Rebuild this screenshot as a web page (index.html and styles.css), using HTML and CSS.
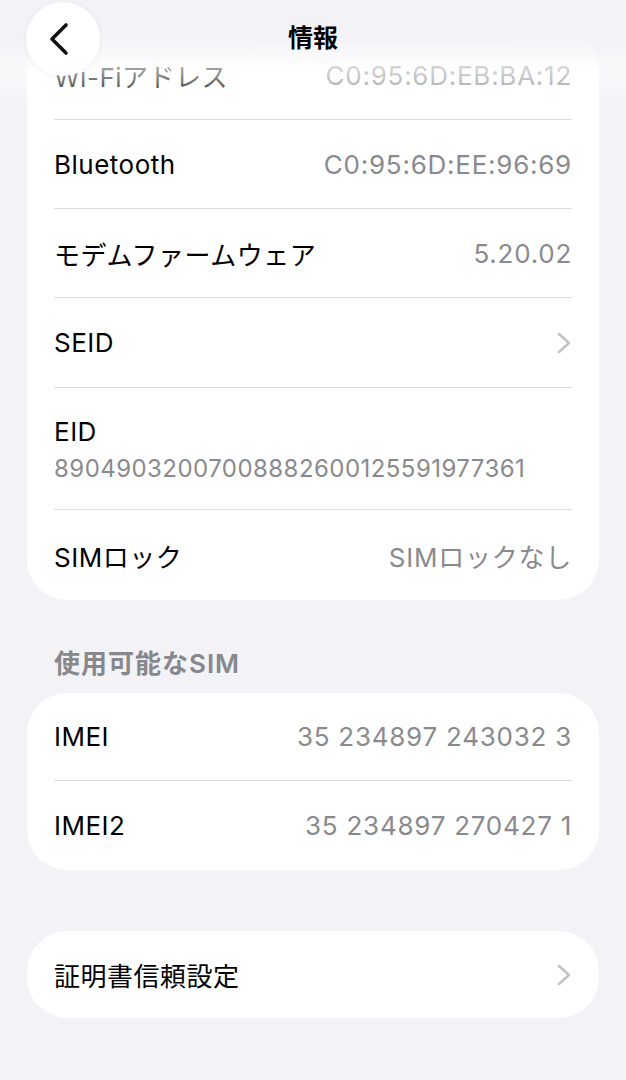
FILE: index.html
```html
<!DOCTYPE html>
<html lang="ja">
<head>
    <meta charset="UTF-8">
    <meta name="viewport" content="width=device-width, initial-scale=1.0">
    <title>情報</title>
    <link rel="stylesheet" href="styles.css">
</head>
<body>
    <header class="nav">
        <button class="back" aria-label="戻る">
            <svg width="24" height="34" viewBox="0 0 24 34">
                <path d="M17 3 L3 17 L17 31" fill="none" stroke="#111" stroke-width="3.6" stroke-linecap="round" stroke-linejoin="round"/>
            </svg>
        </button>
        <h1 class="nav-title">情報</h1>
    </header>

    <main class="page">
        <section class="card card-info">
            <div class="row">
                <span class="label">Wi-Fiアドレス</span>
                <span class="value">C0:95:6D:EB:BA:12</span>
            </div>
            <div class="row">
                <span class="label">Bluetooth</span>
                <span class="value">C0:95:6D:EE:96:69</span>
            </div>
            <div class="row">
                <span class="label">モデムファームウェア</span>
                <span class="value">5.20.02</span>
            </div>
            <div class="row">
                <span class="label">SEID</span>
                <svg class="chevron" width="16" height="22" viewBox="0 0 16 22">
                    <path d="M3 2 L13 11 L3 20" fill="none" stroke="#c4c4c7" stroke-width="2.6" stroke-linecap="round" stroke-linejoin="round"/>
                </svg>
            </div>
            <div class="row row-stack">
                <span class="label">EID</span>
                <span class="value-sub">89049032007008882600125591977361</span>
            </div>
            <div class="row">
                <span class="label">SIMロック</span>
                <span class="value">SIMロックなし</span>
            </div>
        </section>

        <h2 class="section-title">使用可能なSIM</h2>
        <section class="card card-sim">
            <div class="row">
                <span class="label">IMEI</span>
                <span class="value">35 234897 243032 3</span>
            </div>
            <div class="row">
                <span class="label">IMEI2</span>
                <span class="value">35 234897 270427 1</span>
            </div>
        </section>

        <section class="card card-single">
            <div class="row">
                <span class="label">証明書信頼設定</span>
                <svg class="chevron" width="16" height="22" viewBox="0 0 16 22">
                    <path d="M3 2 L13 11 L3 20" fill="none" stroke="#c4c4c7" stroke-width="2.6" stroke-linecap="round" stroke-linejoin="round"/>
                </svg>
            </div>
        </section>
    </main>
</body>
</html>
```

FILE: styles.css
```css
body {
    margin: 0;
    padding: 0;
    background-color: #f2f2f7;
    font-family: Inter, "Noto Sans CJK JP", sans-serif;
    color: #000;
}

.nav {
    position: absolute;
    top: 0;
    left: 0;
    right: 0;
    height: 110px;
    background: linear-gradient(to bottom, rgba(242, 242, 247, 0.97) 0%, rgba(242, 242, 247, 0.85) 35%, rgba(255, 255, 255, 0.6) 65%, rgba(255, 255, 255, 0) 100%);
    z-index: 2;
}

.back {
    position: absolute;
    left: 26px;
    top: 2px;
    width: 74px;
    height: 74px;
    border: none;
    border-radius: 50%;
    background: rgba(255, 255, 255, 0.96);
    box-shadow: 0 1px 6px rgba(0, 0, 0, 0.06);
    display: flex;
    align-items: center;
    justify-content: center;
    padding: 0 4px 0 0;
}

.nav-title {
    margin: 0;
    text-align: center;
    font-size: 25px;
    font-weight: 700;
    line-height: 38px;
    padding-top: 19px;
}

.page {
    padding-top: 31px;
    padding-bottom: 40px;
}

.card {
    margin: 0 27px;
    background: #fff;
    border-radius: 40px;
    padding: 0 27px;
}

.card + .card {
    margin-top: 61px;
}

.row {
    height: 88px;
    display: flex;
    align-items: center;
    justify-content: space-between;
    border-bottom: 1px solid #dedee2;
    font-size: 26px;
}

.card-info .row:nth-child(4) {
    height: 89px;
}

.card-info .row:last-child {
    height: 90px;
}

.row:last-child {
    border-bottom: none;
}

.card-sim .row {
    height: 87px;
}

.card-sim .row:last-child {
    height: 89px;
}

.card-single .row {
    height: 87px;
}

.label {
    letter-spacing: 0.5px;
}

.value {
    color: #8a8a8e;
    letter-spacing: 0.75px;
}

.row-stack {
    height: auto;
    flex-direction: column;
    align-items: flex-start;
    padding: 28px 0 25px;
}

.row-stack .label {
    line-height: 32px;
}

.value-sub {
    margin-top: 6px;
    line-height: 30px;
    font-size: 24px;
    letter-spacing: 0.45px;
    color: #8a8a8e;
}

.section-title {
    margin: 0;
    padding: 48px 54px 14px;
    font-size: 26px;
    line-height: 31px;
    font-weight: 600;
    letter-spacing: 1px;
    color: #87878c;
}
```
